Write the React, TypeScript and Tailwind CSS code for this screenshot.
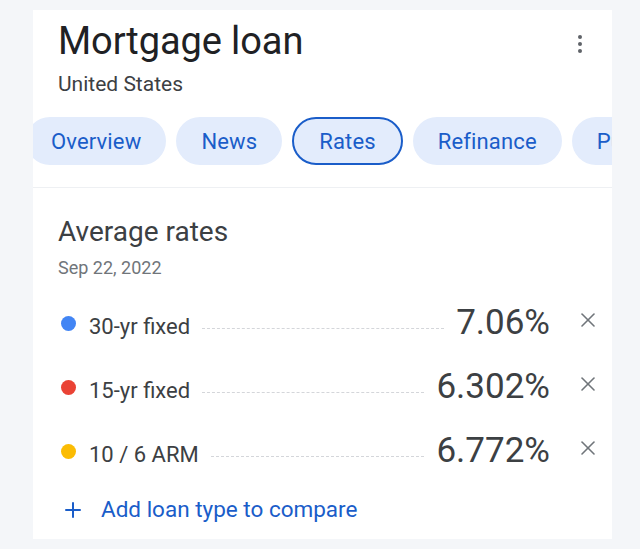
import { Plus, X } from 'lucide-react';

const tabs = [
  { label: 'Overview', active: false },
  { label: 'News', active: false },
  { label: 'Rates', active: true },
  { label: 'Refinance', active: false },
  { label: 'Purchase', active: false },
];

const rates = [
  { name: '30-yr fixed', value: '7.06%', dot: 'bg-[#4285f4]' },
  { name: '15-yr fixed', value: '6.302%', dot: 'bg-[#ea4335]' },
  { name: '10 / 6 ARM', value: '6.772%', dot: 'bg-[#fbbc04]' },
];

export default function App() {
  return (
    <div className="w-[640px] h-[549px] overflow-hidden bg-[#f4f6f9] pt-[10px] font-['Roboto',sans-serif]">
      <div className="ml-[33px] w-[579px] bg-white">
        {/* Header */}
        <div className="flex items-start justify-between pl-[25px] pr-[30px] pt-[8px]">
          <div>
            <h1 className="text-[38px] leading-[46px] text-[#202124] tracking-[-0.1px]">Mortgage loan</h1>
            <p className="mt-[8px] text-[21px] leading-[24px] text-[#3c4043]">United States</p>
          </div>
          <div className="mt-[17px] flex flex-col items-center gap-[3px]">
            <span className="w-[4px] h-[4px] rounded-full bg-[#5f6368]" />
            <span className="w-[4px] h-[4px] rounded-full bg-[#5f6368]" />
            <span className="w-[4px] h-[4px] rounded-full bg-[#5f6368]" />
          </div>
        </div>

        {/* Tabs */}
        <div className="mt-[21px] overflow-hidden">
          <div className="flex gap-[10px] ml-[-7px]">
            {tabs.map((t) => (
              <div
                key={t.label}
                className={`shrink-0 h-[48px] px-[25px] rounded-full flex items-center bg-[#e3ecfc] text-[22px] tracking-[0.15px] text-[#1a5dc9] ${
                  t.active ? 'border-[2px] border-[#1a5dc9] px-[23px]' : ''
                }`}
              >
                {t.label}
              </div>
            ))}
          </div>
        </div>

        <div className="mt-[22px] border-t border-[#eef0f3]" />

        {/* Average rates */}
        <div className="pl-[25px] pr-[12px] pt-[28px] pb-[12px]">
          <h2 className="text-[28px] leading-[32px] text-[#3c4043]">Average rates</h2>
          <p className="mt-[10px] text-[18px] leading-[20px] text-[#70757a]">Sep 22, 2022</p>

          <div className="mt-[24px] flex flex-col gap-[22px]">
            {rates.map((r) => (
              <div key={r.name} className="flex items-center h-[42px]">
                <span className={`w-[15px] h-[15px] rounded-full ${r.dot} ml-[3px]`} />
                <span className="ml-[13px] text-[22px] text-[#3c4043] mt-[6px]">{r.name}</span>
                <span className="flex-1 mx-[12px] mt-[10px] border-t border-dashed border-[#d4d6da]" />
                <span className="text-[35px] leading-[42px] text-[#3c4043]">{r.value}</span>
                <X className="ml-[26px] w-[24px] h-[24px] text-[#70757a] -mt-[6px]" strokeWidth={1.6} />
              </div>
            ))}
          </div>

          <div className="mt-[21px] flex items-center text-[#1a5dc9]">
            <Plus className="ml-[3px] w-[24px] h-[24px]" strokeWidth={2} />
            <span className="ml-[16px] text-[22.5px]">Add loan type to compare</span>
          </div>
        </div>
      </div>
    </div>
  );
}
